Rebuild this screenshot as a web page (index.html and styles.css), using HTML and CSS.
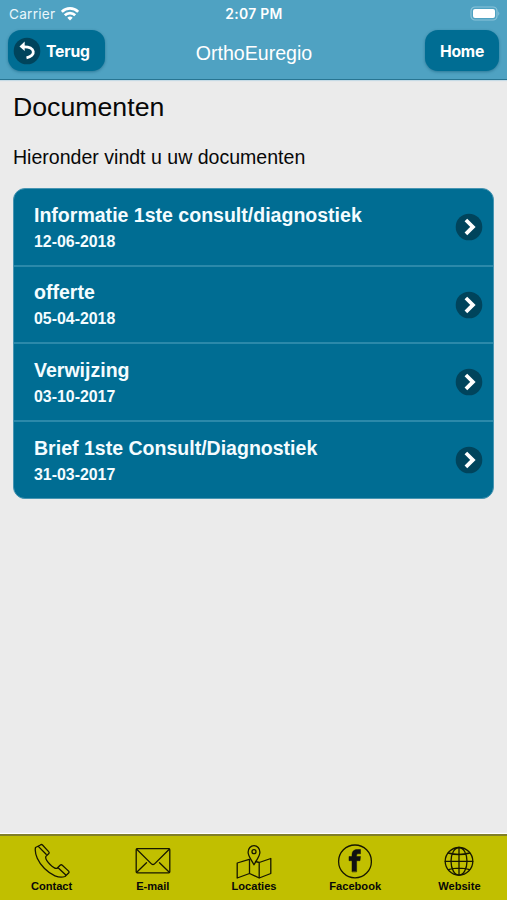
FILE: index.html
```html
<!DOCTYPE html>
<html lang="nl">
<head>
<meta charset="utf-8">
<title>OrthoEuregio</title>
<link rel="stylesheet" href="styles.css">
</head>
<body>
<svg class="sprite" width="0" height="0">
  <symbol id="chevron" viewBox="0 0 28 28">
    <circle cx="14" cy="14" r="13.3" fill="#00445c"/>
    <path d="M10.900 7l7 6.900-7 6.900" fill="none" stroke="#fff" stroke-width="3.8"/>
  </symbol>
</svg>
<header class="header">
  <div class="status">
    <div class="carrier"><span>Carrier</span>
      <svg width="18" height="14" viewBox="0 0 18 14" fill="none" stroke="#fff" stroke-width="2.7">
        <path d="M.8 4.800a11.600 11.600 0 0 1 16.400 0M3.800 8.200a7.400 7.400 0 0 1 10.400 0"/>
        <path d="M9 13.600l-2.700-2.800a3.800 3.800 0 0 1 5.400 0z" fill="#fff" stroke="none"/>
      </svg>
    </div>
    <div class="time">2:07 PM</div>
    <div class="battery">
      <svg width="31" height="15" viewBox="0 0 31 15">
        <rect x="1" y="1" width="26" height="13" rx="4" fill="none" stroke="#8bc4d9" stroke-width="1.200"/>
        <rect x="3" y="3" width="22" height="9" rx="2" fill="#fff"/>
        <path d="M28.300 5.200q2 2.300 0 4.600z" fill="#8bc4d9"/>
      </svg>
    </div>
  </div>
  <nav class="bar">
    <a class="btn back">
      <svg width="28" height="28" viewBox="0 0 28 28">
        <circle cx="14" cy="14" r="13.300" fill="#00445c"/>
        <path d="M10 9.900q4.500-.3 7.500 1.200c3.200 1.700 3.700 5 1.400 7.200q-1.900 1.900-5.400 2.600" fill="none" stroke="#fff" stroke-width="2.800"/>
        <path d="M6.500 9.500l5.200-4.900v9.500z" fill="#fff"/>
      </svg>
      <span>Terug</span>
    </a>
    <h1 class="title">OrthoEuregio</h1>
    <a class="btn home">Home</a>
  </nav>
</header>
<main class="content">
  <h2>Documenten</h2>
  <p>Hieronder vindt u uw documenten</p>
  <ul class="list">
    <li><div><h3>Informatie 1ste consult/diagnostiek</h3><time>12-06-2018</time></div><svg class="go"><use href="#chevron"/></svg></li>
    <li><div><h3>offerte</h3><time>05-04-2018</time></div><svg class="go"><use href="#chevron"/></svg></li>
    <li><div><h3>Verwijzing</h3><time>03-10-2017</time></div><svg class="go"><use href="#chevron"/></svg></li>
    <li><div><h3>Brief 1ste Consult/Diagnostiek</h3><time>31-03-2017</time></div><svg class="go"><use href="#chevron"/></svg></li>
  </ul>
</main>
<footer class="footer">
  <a>
    <svg width="36" height="36" viewBox="0 0 36 36">
      <path d="M1.500 4.500C.2 11 4.500 19.500 10.500 25.500 17 32 25 35.800 31 33.500L34.600 30c.6-.7.600-1.300 0-1.900l-6.300-5.900c-.8-.7-1.500-.6-2.200.1l-3 3c-1.400.6-4-.8-7-3.800-3-3-5-6.200-4.200-8.100l2.700-2.700c.7-.7.700-1.400 0-2.100L8.500 2c-.7-.7-1.400-.7-2.100 0zM4.300 3.400l7.800 7.900M23.800 24.500l8 7.500"/>
    </svg>
    <span>Contact</span>
  </a>
  <a>
    <svg width="36" height="36" viewBox="0 0 36 36">
      <rect x="1.200" y="5.700" width="33.600" height="24.100" rx="1"/>
      <path d="M1.700 6.300l15 14.800q1.300 1 2.600 0l15-14.800M1.700 29.300l9.800-9.500M34.300 29.300l-9.800-9.500"/>
    </svg>
    <span>E-mail</span>
  </a>
  <a>
    <svg width="36" height="36" viewBox="0 0 36 36">
      <path d="M18 21.800c-2.500-5-5.900-8.700-5.900-12.600a5.900 6.600 0 0 1 11.800 0c0 3.900-3.400 7.600-5.900 12.600z"/>
      <circle cx="18" cy="8.700" r="2"/>
      <path d="M13.200 16.300L1.200 20v15l12.300-4.500 9.700 4.500 11.600-4.500v-15l-11.600 4v15.500M13.500 16.500v14M19.500 18.500l3.700 1"/>
    </svg>
    <span>Locaties</span>
  </a>
  <a>
    <svg width="36" height="36" viewBox="0 0 36 36">
      <circle cx="18" cy="18.400" r="16.400"/>
      <path d="M15 28.500V17.700h-3v-4.200h3v-1.700c0-3.500 2-5.300 5.500-5.300h3v4.300h-2c-1.400 0-1.900.6-1.900 1.500v1.200h3.900l-.5 4.200h-3.400v10.800z" fill="#111" stroke="#111" stroke-width=".5"/>
    </svg>
    <span>Facebook</span>
  </a>
  <a class="website">
    <svg width="36" height="36" viewBox="0 0 36 36">
      <circle cx="18" cy="18.300" r="13.800"/>
      <ellipse cx="18" cy="18.300" rx="8" ry="13.800"/>
      <path d="M18 4.500v27.600M4.200 18.300h27.600M7.200 10q10.800 3 21.600 0M7.200 26.600q10.800-3 21.600 0"/>
    </svg>
    <span>Website</span>
  </a>
</footer>
</body>
</html>
```
FILE: styles.css
```css
* { box-sizing: border-box; }
body {
  margin: 0;
  height: 900px;
  display: flex;
  flex-direction: column;
  background: #ebebeb;
  color: #080808;
  font-family: "Liberation Sans", Arial, sans-serif;
}
h1, h2, h3, p, ul { margin: 0; padding: 0; }
.sprite { position: absolute; }
.header {
  height: 80px;
  background: #4fa2c2;
  border-bottom: 1px solid #287592;
  box-shadow: 0 1px 1px #c6dbe6;
  color: #fff;
}
.status {
  height: 27px;
  display: grid;
  grid-template-columns: 1fr auto 1fr;
  align-items: center;
  padding: 0 6px 0 9px;
  font: 13.600px/16px Inter, sans-serif;
}
.carrier { display: flex; align-items: center; gap: 6px; color: #e9f7fc; letter-spacing: .25px; }
.time { font-weight: 600; font-size: 13.900px; letter-spacing: .3px; margin-right: 2px; }
.battery { display: flex; justify-content: flex-end; }
.bar {
  display: grid;
  grid-template-columns: 1fr auto 1fr;
  align-items: start;
  padding: 3px 8px 0;
}
.btn {
  height: 41px;
  display: flex;
  align-items: center;
  border-radius: 13px;
  background: #006d93;
  box-shadow: 0 1px 3px rgba(0, 70, 100, .45);
  font: 700 15.700px/20px Inter, sans-serif;
  letter-spacing: -.2px;
}
.back { width: 97px; padding: 0 0 0 5px; gap: 5px; }
.back span, .home { padding-top: 3px; }
.home { width: 74px; justify-content: center; justify-self: end; }
.title { font-size: 19.600px; line-height: 24px; font-weight: 400; padding: 11px 0 0 1px; }
.content { flex: 1; padding: 12px 13px 0; }
h2 { font-size: 26.700px; line-height: 30px; font-weight: 400; }
p { font-size: 19.560px; line-height: 24px; margin-top: 23px; }
.list {
  list-style: none;
  margin-top: 19px;
  height: 311px;
  display: grid;
  grid-template-rows: 76px 77px 78px 78px;
  background: #006d93;
  border: 1px solid #4795b2;
  border-radius: 12px;
  overflow: hidden;
}
.list li {
  display: flex;
  align-items: center;
  justify-content: space-between;
  padding: 0 10px 0 20px;
  color: #f4fcff;
  font-weight: 700;
}
.list li + li { border-top: 2px solid #2b89aa; }
.list li > div { padding-top: 2px; }
h3 { font-size: 19.550px; line-height: 26px; }
time { display: block; font-size: 15.900px; line-height: 27px; }
.go { width: 28px; height: 28px; }
.footer {
  height: 66px;
  display: grid;
  grid-template-columns: repeat(5, 1fr);
  padding: 7px 0 0 1px;
  background: #c1bf00;
  border-top: 2px solid #817f28;
  box-shadow: 0 -1px 1px #fff;
}
.footer a { display: flex; flex-direction: column; align-items: center; }
.footer .website { padding-left: 6px; }
.footer svg { fill: none; stroke: #171700; stroke-width: 1.300; stroke-linejoin: round; stroke-linecap: round; }
.footer span { font-size: 11.100px; line-height: 14px; font-weight: 700; }
```
